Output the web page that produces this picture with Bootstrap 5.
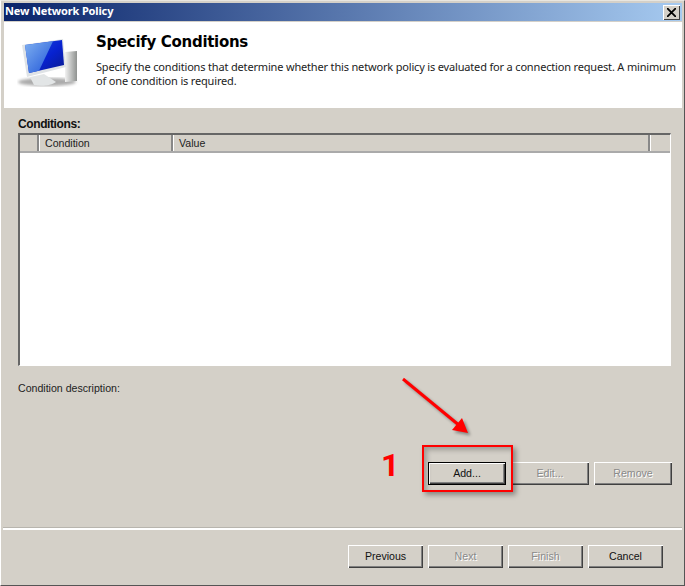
<!DOCTYPE html>
<html lang="en">
<head>
<meta charset="utf-8">
<title>New Network Policy</title>
<link rel="stylesheet" href="https://cdn.jsdelivr.net/npm/bootstrap@5.3.0/dist/css/bootstrap.min.css">
<style>
html,body{margin:0;background:#d4d0c8;}
body{font-family:"Liberation Sans",Arial,sans-serif;font-size:10.6px;color:#000;overflow:hidden;}
.win-frame{position:relative;width:685px;height:586px;background:#d4d0c8;padding:2px 2px 2px 3px;border-top:1px solid #e8e6e0;border-left:1px solid #fff;border-right:1px solid #555;border-bottom:1px solid #555;box-sizing:border-box;overflow:hidden;}
.win-title{height:18px;padding:0 2px 0 1px;background:linear-gradient(90deg,#0a246a,#a6caf0);flex:none;}
.win-title-text{font:bold 11px/14px "Noto Sans",sans-serif;letter-spacing:-.15px;color:#fff;margin-top:-3px;}
.win-x{width:17px;height:15px;background:#d4d0c8;box-shadow:inset 1px 1px 0 #fff,inset -1px -1px 0 #404040;padding:3px 4px;}
.win-x svg{display:block;}
.win-head{height:86px;background:#fff;flex:none;padding:8px 0 0 13px;margin-top:1px;}
.head-icon{width:79px;flex:none;padding-top:8px;}
.head-title{font:bold 15px/24px "DejaVu Sans",sans-serif;letter-spacing:-.3px;margin:0;}
.head-text{font:11px/14px "Noto Sans",sans-serif;letter-spacing:-.17px;margin:6px -2px 0 0;color:#222;}
.win-body{flex:1 1 auto;padding:9px 11px 0 14px;min-height:0;}
.lbl-strong{font-weight:bold;font-size:12px;line-height:15px;letter-spacing:-.4px;color:#111;}
.list-box{height:233px;margin-top:1px;background:#fff;border-top:2px solid #666;border-left:2px solid #666;border-right:1px solid #fff;border-bottom:1px solid #fff;flex:none;}
.list-head{height:16px;background:#d4d0c8;border-bottom:2px solid #aaa;box-sizing:content-box;line-height:16px;color:#222;}
.col-a,.col-b,.col-c,.col-d{border-right:2px solid #888;box-shadow:1px 0 0 #fff;height:16px;padding-left:6px;}
.col-a{width:19px;}
.col-b{width:134px;}
.col-c{flex:1 1 auto;}
.col-d{width:20px;border-right:0;box-shadow:inset 1px 0 0 #fff;}
.desc-lbl{margin-top:15px;line-height:15px;color:#222;}
.act-row{margin-top:66px;margin-right:-1px;gap:5px;}
.xp-btn{width:78px;height:23px;padding:0;font-size:10.6px;line-height:21px;border:0;border-radius:0;background:#d4d0c8;color:#111;box-shadow:inset 1px 1px 0 #fff,inset -1px -1px 0 #404040,inset -2px -2px 0 #808080;}
.xp-btn:disabled,.xp-btn.disabled{background:#d4d0c8;color:#8a8a8a;text-shadow:1px 1px 0 #fff;opacity:1;}
.xp-btn.is-default{outline:1px solid #000;outline-offset:-1px;box-shadow:inset 2px 2px 0 #fff,inset -2px -2px 0 #404040,inset -3px -3px 0 #808080;}
.nav-btn{width:75px;}
.win-rule{height:3px;background:#fff;border-top:1px solid #b8b5ae;margin:0 0 0 -1px;flex:none;}
.nav-row{padding:15px 19px 15px 0;gap:5px;flex:none;}
.note-box{position:absolute;left:421px;top:444px;width:91px;height:47px;border:2px solid #f00;box-shadow:3px 3px 5px rgba(0,0,0,.35),inset 3px 3px 5px rgba(0,0,0,.25);}
.note-num{position:absolute;left:380px;top:448px;font:bold 32px/32px Roboto,sans-serif;color:#f00;}
.note-arrow{position:absolute;left:394px;top:370px;}
</style>
</head>
<body>
<div class="win-frame d-flex flex-column">
  <div class="win-title d-flex align-items-center justify-content-between">
    <span class="win-title-text">New Network Policy</span>
    <span class="win-x"><svg width="9" height="9" viewBox="0 0 9 9"><path d="M0 0L9 9M9 0L0 9" stroke="#000" stroke-width="1.8"/></svg></span>
  </div>
  <div class="win-head d-flex">
    <div class="head-icon">
      <svg width="64" height="52" viewBox="0 0 64 52">
        <defs>
          <linearGradient id="scr" x1="0" y1="0" x2="1" y2="1"><stop offset="0" stop-color="#1d4fe0"/><stop offset=".55" stop-color="#0722d0"/><stop offset="1" stop-color="#0a1a8c"/></linearGradient>
          <linearGradient id="pane" x1="0" y1="0" x2="1" y2="1"><stop offset="0" stop-color="#7fb0f0"/><stop offset="1" stop-color="#1f55d8"/></linearGradient>
          <linearGradient id="twr" x1="0" y1="0" x2="1" y2="0"><stop offset="0" stop-color="#f2f2f2"/><stop offset="1" stop-color="#8f9290"/></linearGradient>
          <filter id="soft"><feGaussianBlur stdDeviation="1.6"/></filter>
          <filter id="tiny"><feGaussianBlur stdDeviation=".4"/></filter>
        </defs>
        <ellipse cx="30" cy="44" rx="29" ry="4" fill="#aaa" filter="url(#soft)"/>
        <path d="M48 14l12 -1 0 30-12 1z" fill="url(#twr)" filter="url(#tiny)"/>
        <path d="M5 7L46 1l3 28-39 10z" fill="#dfe3e6" filter="url(#tiny)"/>
        <path d="M8 7L45 2l2 25-35 8z" fill="url(#scr)"/>
        <path d="M8 7L36 3.2 22 32.7 12 35z" fill="url(#pane)"/>
        <path d="M13 39l14-3 12 8c-4 3-14 5-22 3z" fill="#e2e5e6" filter="url(#tiny)"/>
      </svg>
    </div>
    <div class="flex-grow-1">
      <h1 class="head-title">Specify Conditions</h1>
      <p class="head-text">Specify the conditions that determine whether this network policy is evaluated for a connection request. A minimum of one condition is required.</p>
    </div>
  </div>
  <div class="win-body d-flex flex-column">
    <div class="lbl-strong">Conditions:</div>
    <div class="list-box">
      <div class="list-head d-flex">
        <div class="col-a"></div>
        <div class="col-b">Condition</div>
        <div class="col-c">Value</div>
        <div class="col-d"></div>
      </div>
    </div>
    <div class="desc-lbl">Condition description:</div>
    <div class="act-row d-flex justify-content-end">
      <button type="button" class="btn xp-btn is-default">Add...</button>
      <button type="button" class="btn xp-btn" disabled>Edit...</button>
      <button type="button" class="btn xp-btn" disabled>Remove</button>
    </div>
  </div>
  <div class="win-rule"></div>
  <div class="nav-row d-flex justify-content-end">
    <button type="button" class="btn xp-btn nav-btn">Previous</button>
    <button type="button" class="btn xp-btn nav-btn" disabled>Next</button>
    <button type="button" class="btn xp-btn nav-btn" disabled>Finish</button>
    <button type="button" class="btn xp-btn nav-btn">Cancel</button>
  </div>
  <div class="note-box"></div>
  <div class="note-num">1</div>
  <svg class="note-arrow" width="90" height="75" viewBox="0 0 90 75">
    <defs><filter id="arrowShade"><feGaussianBlur stdDeviation="1.5"/></filter></defs>
    <g transform="translate(2.5,2.5)" fill="#000" stroke="#000" opacity=".35" filter="url(#arrowShade)">
      <path d="M8 8L65 55" stroke-width="3"/><path d="M73 62L57 59 67 47z" stroke="none"/>
    </g>
    <path d="M8 8L65 55" stroke="#f00" stroke-width="3" fill="none"/>
    <path d="M73 62L57 59 67 47z" fill="#f00"/>
  </svg>
</div>
<script src="https://cdn.jsdelivr.net/npm/bootstrap@5.3.0/dist/js/bootstrap.bundle.min.js"></script>
</body>
</html>
